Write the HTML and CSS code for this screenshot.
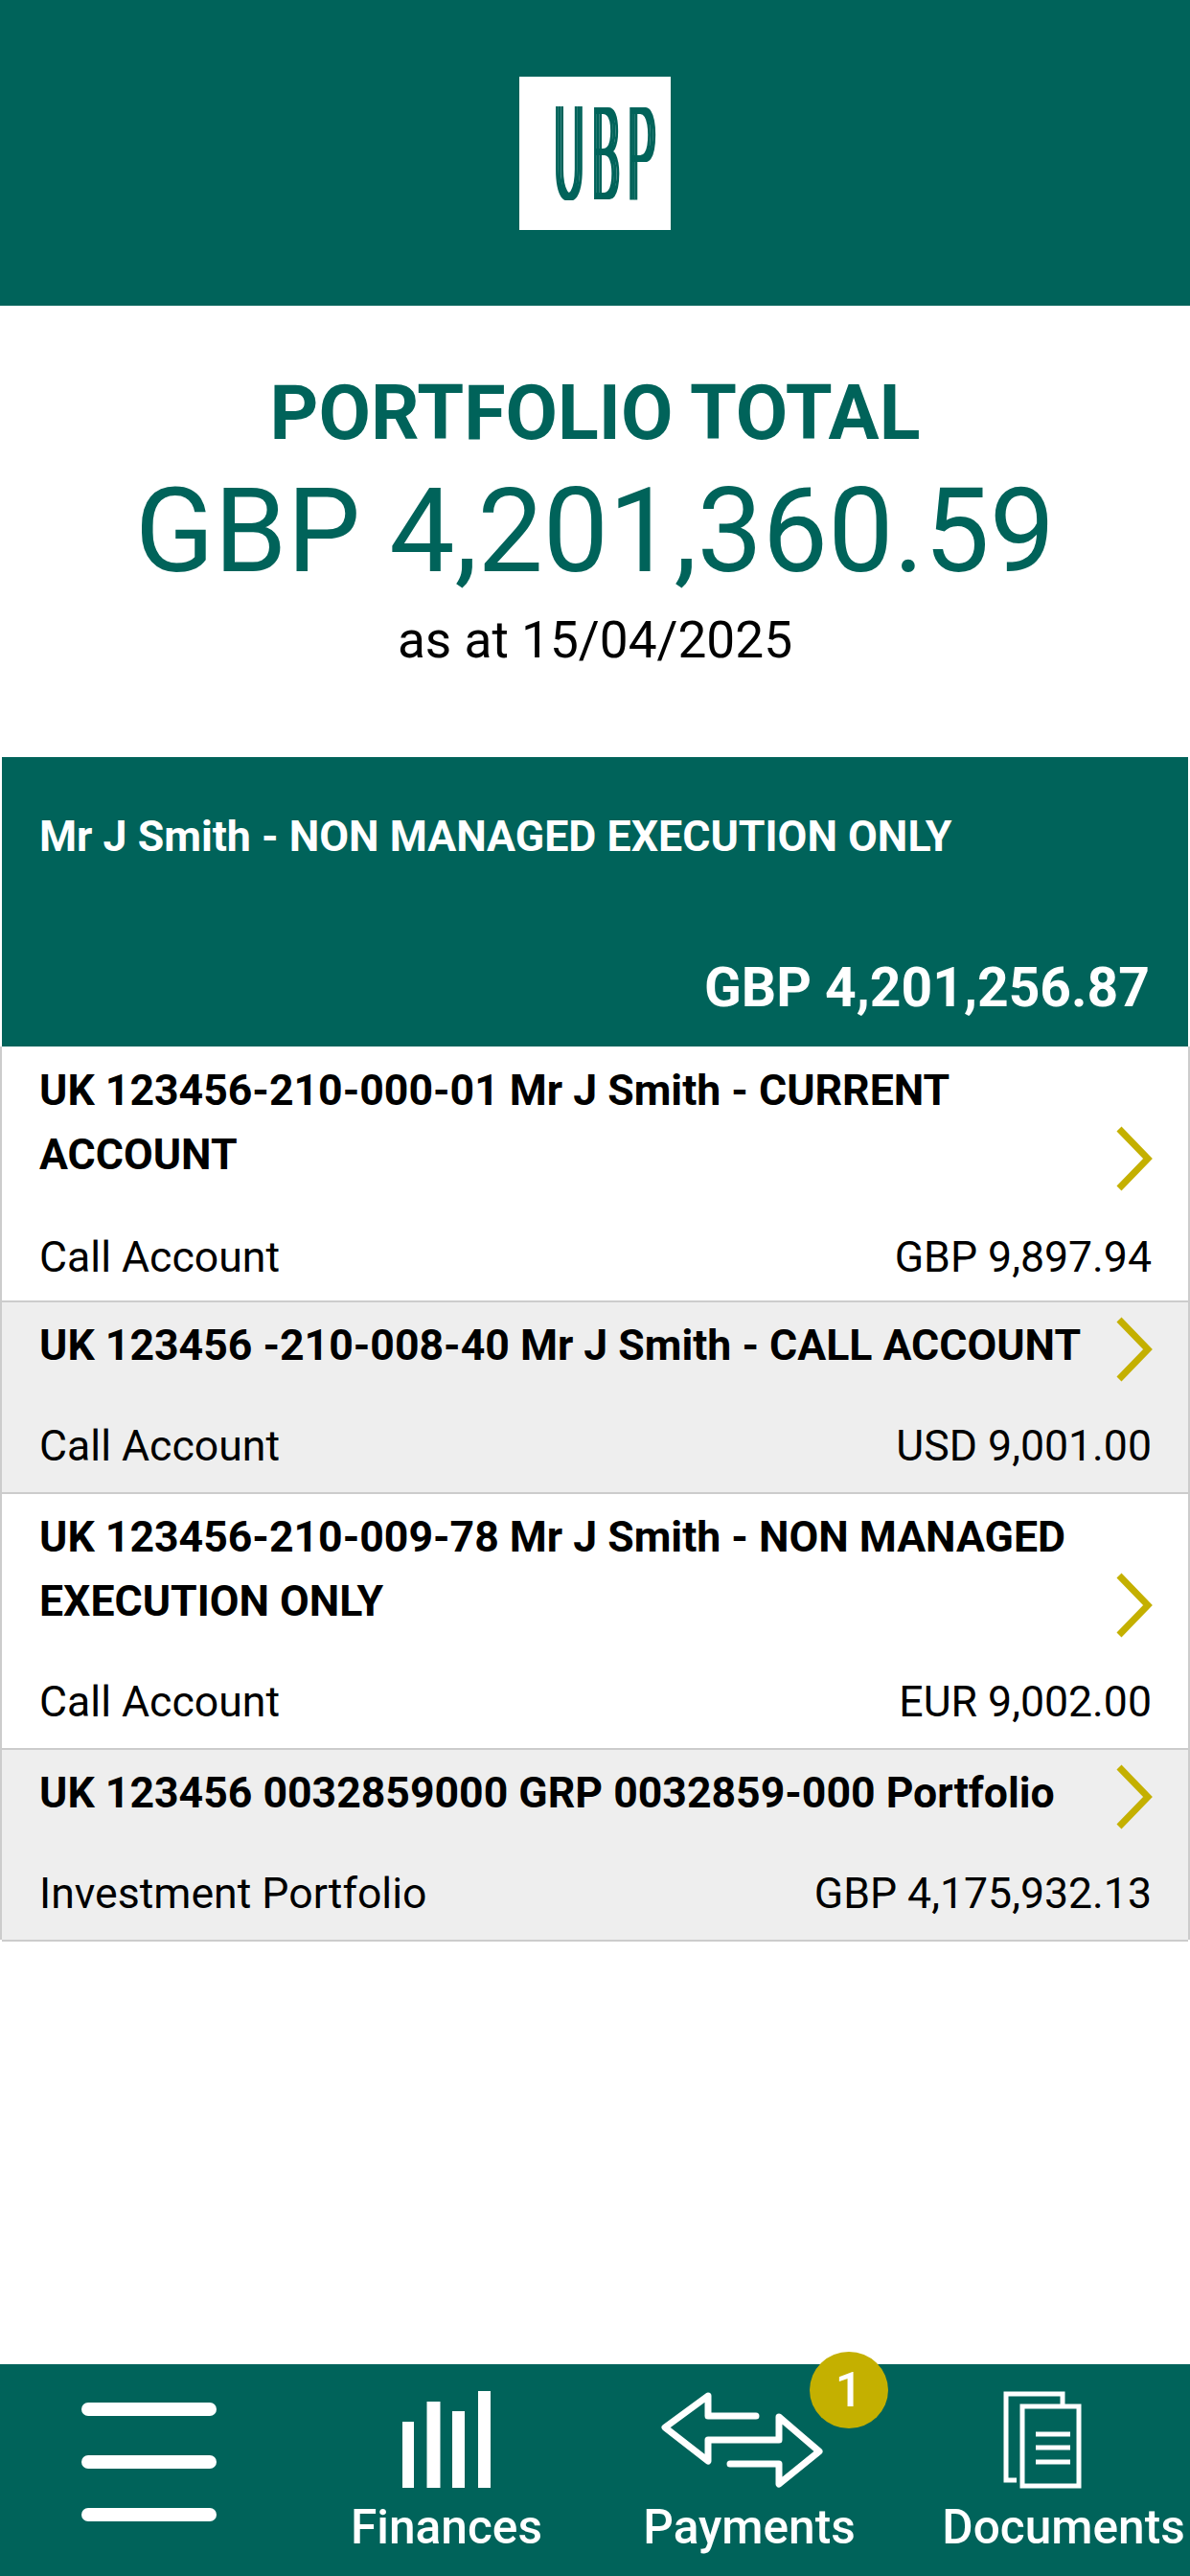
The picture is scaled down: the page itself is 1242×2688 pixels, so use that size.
FILE: index.html
```html
<!DOCTYPE html>
<html lang="en">
<head>
    <meta charset="UTF-8">
    <meta name="viewport" content="width=device-width, initial-scale=1.0">
    <title>Portfolio</title>
    <link rel="stylesheet" href="styles.css">
</head>
<body>

    <header class="top-bar">
        <div class="logo"><span class="logo-text">UBP</span></div>
    </header>

    <section class="total">
        <h1 class="total-title">PORTFOLIO TOTAL</h1>
        <div class="total-amount">GBP 4,201,360.59</div>
        <div class="total-date">as at 15/04/2025</div>
    </section>

    <main class="card">
        <div class="card-head">
            <div class="card-name">Mr J Smith - NON MANAGED EXECUTION ONLY</div>
            <div class="card-sum">GBP 4,201,256.87</div>
        </div>

        <div class="row row-first">
            <div class="row-top">
                <div class="row-title">UK 123456-210-000-01 Mr J Smith - CURRENT ACCOUNT</div>
                <svg class="chevron" viewBox="0 0 40 70"><path d="M4 4 L34 35 L4 66"/></svg>
            </div>
            <div class="row-meta"><span>Call Account</span><span>GBP 9,897.94</span></div>
        </div>

        <div class="row row-grey">
            <div class="row-top">
                <div class="row-title">UK 123456 -210-008-40 Mr J Smith - CALL ACCOUNT</div>
                <svg class="chevron" viewBox="0 0 40 70"><path d="M4 4 L34 35 L4 66"/></svg>
            </div>
            <div class="row-meta"><span>Call Account</span><span>USD 9,001.00</span></div>
        </div>

        <div class="row">
            <div class="row-top">
                <div class="row-title">UK 123456-210-009-78 Mr J Smith - NON MANAGED EXECUTION ONLY</div>
                <svg class="chevron" viewBox="0 0 40 70"><path d="M4 4 L34 35 L4 66"/></svg>
            </div>
            <div class="row-meta"><span>Call Account</span><span>EUR 9,002.00</span></div>
        </div>

        <div class="row row-grey">
            <div class="row-top">
                <div class="row-title">UK 123456 0032859000 GRP 0032859-000 Portfolio</div>
                <svg class="chevron" viewBox="0 0 40 70"><path d="M4 4 L34 35 L4 66"/></svg>
            </div>
            <div class="row-meta"><span>Investment Portfolio</span><span>GBP 4,175,932.13</span></div>
        </div>
    </main>

    <nav class="bottom-nav">
        <div class="nav-item nav-menu">
            <span class="menu-bar"></span>
            <span class="menu-bar"></span>
            <span class="menu-bar"></span>
        </div>

        <div class="nav-item">
            <svg class="nav-icon icon-finances" viewBox="0 0 92 101">
                <rect x="0" y="32" width="12" height="69"/>
                <rect x="25.5" y="11" width="14" height="90"/>
                <rect x="52" y="21" width="13" height="80"/>
                <rect x="79" y="0" width="13" height="101"/>
            </svg>
            <span class="nav-label">Finances</span>
        </div>

        <div class="nav-item">
            <svg class="nav-icon icon-payments" viewBox="0 0 169 102">
                <path d="M99 26 H49 V5 L4 38 L49 73 V51 H123 V27 L165 63 L123 97 V76 H72"/>
            </svg>
            <span class="nav-label">Payments</span>
        </div>

        <div class="nav-item nav-docs">
            <svg class="nav-icon icon-documents" viewBox="0 0 84 102">
                <path d="M16 93 H5 V3 H64 V14"/>
                <rect x="22" y="16" width="59" height="83"/>
                <path d="M36 45 H72 M36 59 H72 M36 74 H72"/>
            </svg>
            <span class="nav-label">Documents</span>
        </div>

        <div class="badge">1</div>
    </nav>

</body>
</html>
```

FILE: styles.css
```css
* {
    box-sizing: border-box;
}
body {
    margin: 0;
    height: 2688px;
    display: flex;
    flex-direction: column;
    font-family: Roboto, "Liberation Sans", sans-serif;
    background: white;
    color: black;
}
.top-bar {
    background: #00635a;
    height: 319px;
    display: flex;
    justify-content: center;
    align-items: center;
}
.logo {
    width: 158px;
    height: 160px;
    background: white;
    display: flex;
    justify-content: center;
    align-items: center;
    overflow: hidden;
}
.logo-text {
    font-weight: 300;
    font-size: 136px;
    line-height: 1;
    letter-spacing: 30px;
    margin-right: -30px;
    margin-top: 5px;
    color: #00635a;
    text-shadow: 8px 0 0 #00635a, -8px 0 0 #00635a;
    transform: scaleX(0.33);
}
.total {
    height: 471px;
    padding-top: 73px;
    text-align: center;
    color: #00635a;
}
.total-title {
    margin: 0;
    font-size: 79px;
    font-weight: bold;
    line-height: 78px;
}
.total-amount {
    font-size: 121.6px;
    line-height: 130px;
    margin-top: 20px;
}
.total-date {
    font-size: 53.2px;
    line-height: 60px;
    margin-top: 18px;
    color: black;
}
.card {
    margin: 0 2px;
    border-bottom: 2px solid #ccc;
}
.card-head {
    background: #00635a;
    height: 302px;
    padding: 51px 40px 0 39px;
    color: white;
    font-weight: bold;
}
.card-name {
    font-size: 44.7px;
    line-height: 64px;
}
.card-sum {
    margin-top: 94px;
    font-size: 57px;
    line-height: 64px;
    text-align: right;
}
.row {
    padding: 12px 38px 14px 39px;
    border-left: 2px solid #ccc;
    border-right: 2px solid #ccc;
    border-bottom: 2px solid #ccc;
    margin: 0 -2px;
}
.row:last-child {
    border-bottom: none;
}
.row-first {
    padding-top: 13px;
    padding-bottom: 11px;
}
.row-first .row-meta {
    margin-top: 40px;
}
.row-grey {
    background: #eee;
}
.row-top {
    display: flex;
    justify-content: space-between;
    align-items: flex-end;
}
.row-title {
    font-weight: bold;
    font-size: 44.6px;
    line-height: 67px;
    width: 1100px;
}
.chevron {
    width: 40px;
    height: 70px;
    margin-bottom: -5px;
    margin-right: -2px;
    flex-shrink: 0;
}
.chevron path {
    fill: none;
    stroke: #c4b000;
    stroke-width: 7;
}
.row-meta {
    display: flex;
    justify-content: space-between;
    font-size: 44.6px;
    line-height: 67px;
    margin-top: 38px;
}
.bottom-nav {
    margin-top: auto;
    position: relative;
    background: #00635a;
    height: 221px;
    display: grid;
    grid-template-columns: 310px 312px 320px 300px;
    color: white;
}
.nav-item {
    display: flex;
    flex-direction: column;
    align-items: center;
    padding-top: 28px;
}
.nav-menu {
    padding-top: 40px;
    gap: 41px;
}
.nav-docs {
    padding-left: 36px;
}
.menu-bar {
    display: block;
    width: 141px;
    height: 14px;
    border-radius: 7px;
    background: white;
}
.nav-icon {
    display: block;
}
.nav-label {
    font-size: 49.6px;
    font-weight: 500;
    line-height: 60px;
    margin-top: 11px;
}
.icon-finances {
    width: 92px;
    height: 101px;
    fill: white;
}
.icon-payments {
    width: 169px;
    height: 102px;
    margin-right: 15px;
    margin-bottom: -1px;
    fill: none;
    stroke: white;
    stroke-width: 7;
    stroke-linecap: round;
    stroke-linejoin: round;
}
.icon-documents {
    width: 84px;
    height: 102px;
    margin-left: -46px;
    margin-bottom: -1px;
    fill: none;
    stroke: white;
    stroke-width: 5;
}
.badge {
    position: absolute;
    left: 845px;
    top: -13px;
    width: 82px;
    height: 80px;
    border-radius: 50%;
    background: #c4b000;
    font-size: 50px;
    font-weight: 500;
    line-height: 80px;
    text-align: center;
}
```
